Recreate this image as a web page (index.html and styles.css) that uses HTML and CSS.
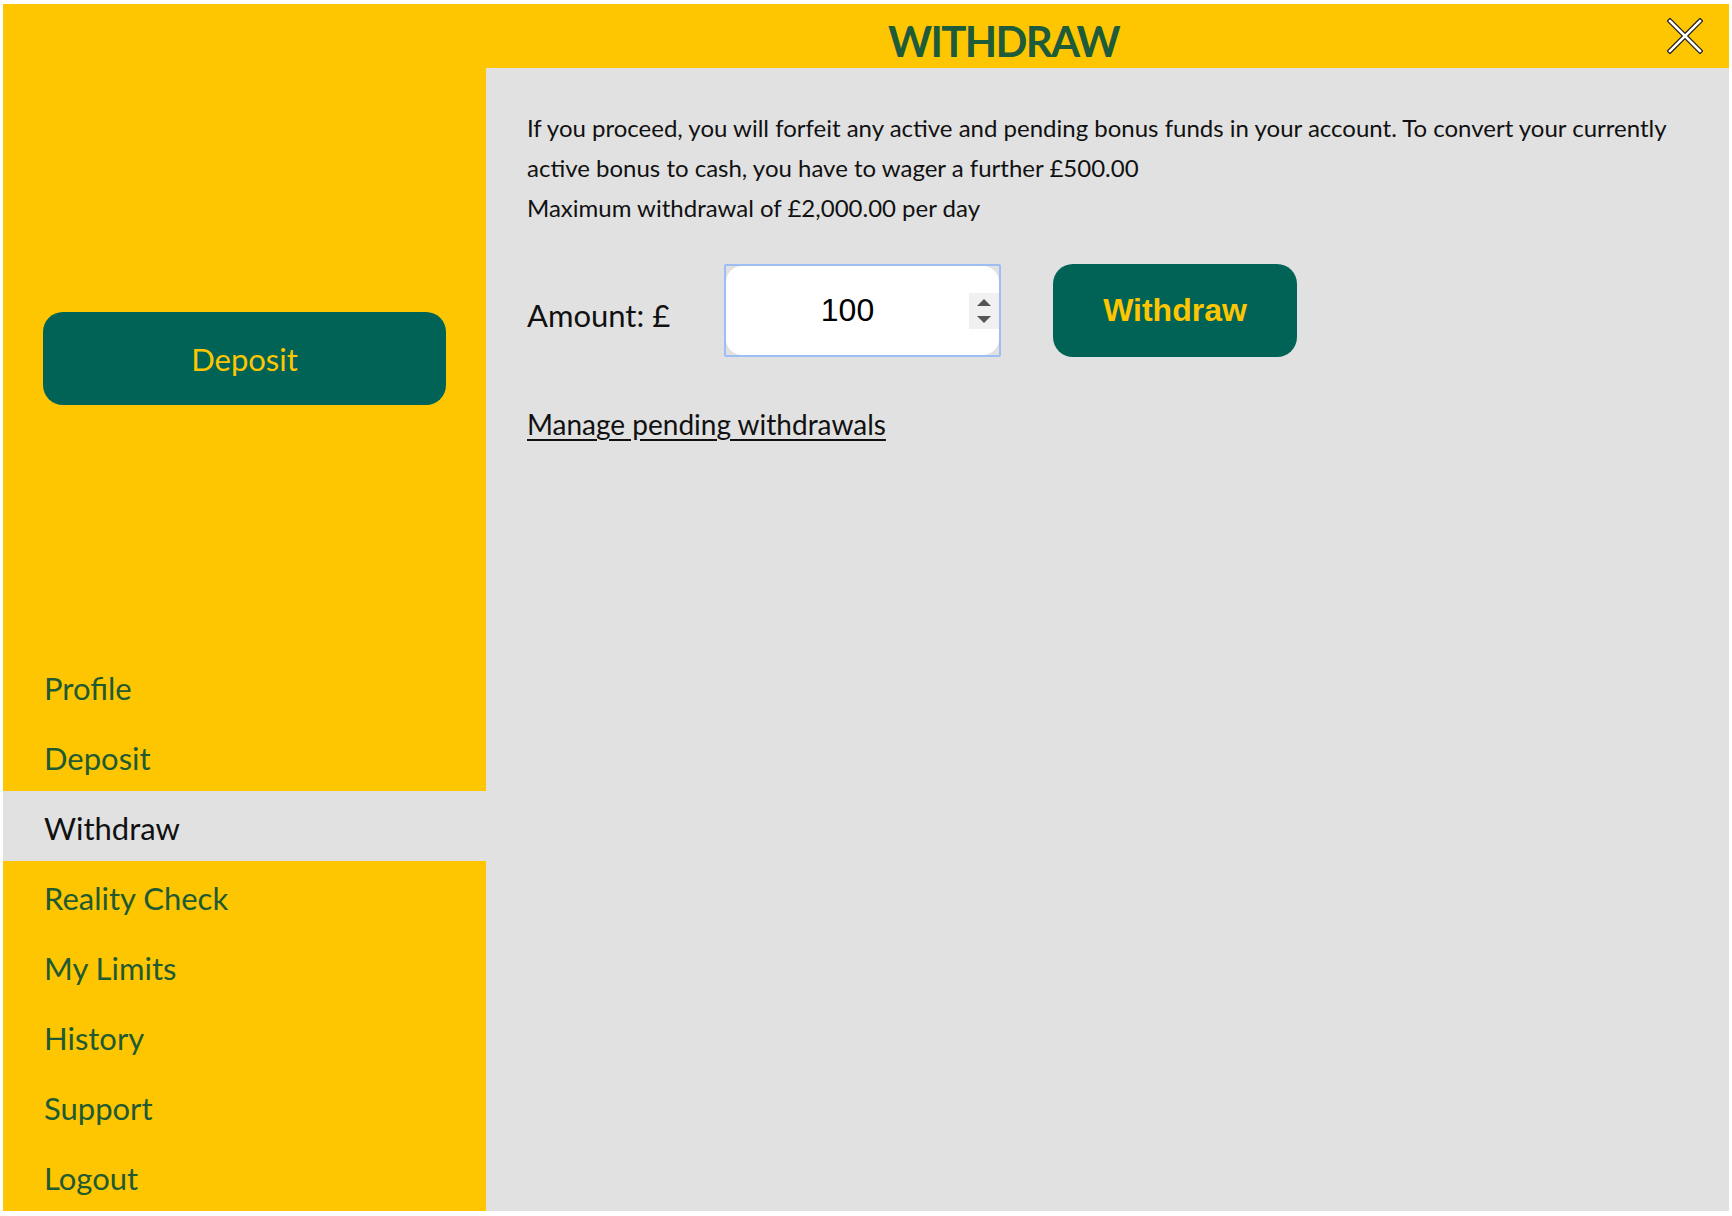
FILE: index.html
```html
<!DOCTYPE html>
<html lang="en">
<head>
<meta charset="utf-8">
<title>Withdraw</title>
<link rel="stylesheet" href="styles.css">
</head>
<body>
<div class="frame">
  <header class="topbar">
    <h1 class="title">WITHDRAW</h1>
    <button class="close" aria-label="Close">
      <svg width="36" height="36" viewBox="0 0 36 36">
        <path d="M3 3 L33 33 M33 3 L3 33" stroke="#1a1a1a" stroke-width="5" stroke-linecap="square"/>
        <path d="M3 3 L33 33 M33 3 L3 33" stroke="#ffffff" stroke-width="2.6" stroke-linecap="square"/>
      </svg>
    </button>
  </header>
  <div class="body">
    <aside class="sidebar">
      <button class="deposit-btn">Deposit</button>
      <nav class="nav">
        <a class="nav-item" href="#">Profile</a>
        <a class="nav-item" href="#">Deposit</a>
        <a class="nav-item active" href="#">Withdraw</a>
        <a class="nav-item" href="#">Reality Check</a>
        <a class="nav-item" href="#">My Limits</a>
        <a class="nav-item" href="#">History</a>
        <a class="nav-item" href="#">Support</a>
        <a class="nav-item" href="#">Logout</a>
      </nav>
    </aside>
    <main class="main">
      <p class="notice">If you proceed, you will forfeit any active and pending bonus funds in your account. To convert your currently active bonus to cash, you have to wager a further £500.00</p>
      <p class="notice">Maximum withdrawal of £2,000.00 per day</p>
      <div class="amount-row">
        <label class="amount-label" for="amount">Amount: £</label>
        <div class="amount-box">
          <div class="amount-field">
            <input id="amount" class="amount-input" type="text" value="100">
            <span class="spinner">
              <span class="tri-up"></span>
              <span class="tri-down"></span>
            </span>
          </div>
        </div>
        <button class="withdraw-btn">Withdraw</button>
      </div>
      <a class="manage-link" href="#">Manage pending withdrawals</a>
    </main>
  </div>
</div>
</body>
</html>
```

FILE: styles.css
```css
* { box-sizing: border-box; }

html, body {
  margin: 0;
  padding: 0;
  background: #ffffff;
}

body {
  font-family: Lato, "Noto Sans", sans-serif;
}

.frame {
  margin: 4px 3px 0 3px;
  height: 1207px;
  background: #fec600;
  display: flex;
  flex-direction: column;
}

.topbar {
  height: 64px;
  flex: 0 0 64px;
  display: flex;
  align-items: center;
  padding-left: 483px;
  padding-right: 26px;
}

.title {
  flex: 1;
  margin: 0;
  padding-top: 10px;
  padding-right: 146px;
  line-height: 50px;
  text-align: center;
  font-size: 42px;
  font-weight: 700;
  letter-spacing: -1.7px;
  color: #1e5b3a;
}

.close {
  width: 36px;
  height: 36px;
  padding: 0;
  border: 0;
  background: transparent;
  display: block;
}

.close svg { display: block; }

.body {
  flex: 1;
  display: flex;
  min-height: 0;
}

.sidebar {
  width: 483px;
  flex: 0 0 483px;
  display: flex;
  flex-direction: column;
  padding-top: 244px;
}

.deposit-btn {
  margin: 0 40px;
  height: 93px;
  padding-top: 2px;
  border: 0;
  border-radius: 20px;
  background: #006356;
  color: #fec600;
  font-family: Lato, "Noto Sans", sans-serif;
  font-size: 31px;
}

.nav {
  margin-top: auto;
  display: flex;
  flex-direction: column;
}

.nav-item {
  height: 70px;
  padding-top: 5px;
  line-height: 65px;
  padding-left: 41px;
  font-size: 31px;
  color: #1f5a33;
  text-decoration: none;
}

.nav-item.active {
  background: #e1e1e1;
  color: #111111;
}

.main {
  flex: 1;
  background: #e1e1e1;
  padding: 40px 41px 0 41px;
  color: #111111;
}

.notice {
  margin: 0;
  font-size: 24px;
  line-height: 40px;
}

.amount-row {
  margin-top: 36px;
  display: flex;
  align-items: center;
}

.amount-label {
  flex: 0 0 197px;
  font-size: 31px;
  padding-top: 9px;
}

.amount-box {
  width: 277px;
  height: 93px;
  border: 2px solid #9dbdf5;
  border-radius: 2px;
  background: #e1e1e1;
}

.amount-field {
  height: 100%;
  background: #ffffff;
  border-radius: 16px;
  display: flex;
  align-items: center;
  overflow: hidden;
}

.amount-input {
  flex: 1;
  height: 100%;
  min-width: 0;
  border: 0;
  outline: 0;
  background: transparent;
  text-align: center;
  font-family: "Liberation Sans", Arial, sans-serif;
  font-size: 32px;
  color: #000000;
  padding: 0;
}

.spinner {
  width: 30px;
  height: 36px;
  flex: 0 0 30px;
  background: #f0f0f0;
  display: flex;
  flex-direction: column;
  align-items: center;
  justify-content: center;
  gap: 10px;
}

.tri-up, .tri-down {
  width: 0;
  height: 0;
  border-left: 7px solid transparent;
  border-right: 7px solid transparent;
}

.tri-up { border-bottom: 7px solid #555555; }
.tri-down { border-top: 7px solid #555555; }

.withdraw-btn {
  margin-left: 52px;
  width: 244px;
  height: 93px;
  border: 0;
  border-radius: 20px;
  background: #006356;
  color: #fec600;
  font-family: "Liberation Sans", Arial, sans-serif;
  font-weight: 700;
  font-size: 32px;
}

.manage-link {
  display: inline-block;
  margin-top: 47px;
  font-size: 28px;
  line-height: 40px;
  color: #111111;
  text-decoration: underline;
  text-underline-offset: 4px;
}
```
